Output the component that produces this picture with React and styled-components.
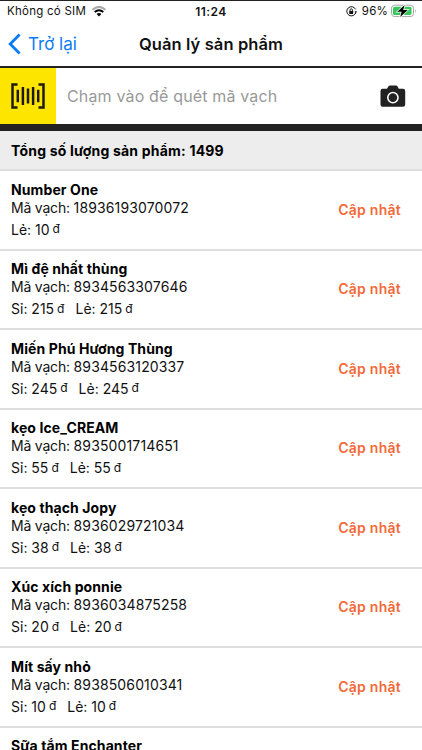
import React from 'react'
import styled, { createGlobalStyle } from 'styled-components';

const products = [
    { name: 'Number One', code: '18936193070072', retail: 10 },
    { name: 'Mì đệ nhất thùng', code: '8934563307646', wholesale: 215, retail: 215 },
    { name: 'Miến Phú Hương Thùng', code: '8934563120337', wholesale: 245, retail: 245 },
    { name: 'kẹo Ice_CREAM', code: '8935001714651', wholesale: 55, retail: 55 },
    { name: 'kẹo thạch Jopy', code: '8936029721034', wholesale: 38, retail: 38 },
    { name: 'Xúc xích ponnie', code: '8936034875258', wholesale: 20, retail: 20 },
    { name: 'Mít sấy nhỏ', code: '8938506010341', wholesale: 10, retail: 10 },
    { name: 'Sữa tắm Enchanter' },
];

const WifiIcon = () => (
    <svg width="14" height="11" viewBox="0 0 14 11" fill="none">
        <path d="M0.6 3.8 Q7 -2 13.4 3.8" stroke="#aaa" strokeWidth="2" />
        <path d="M2.7 6 Q7 2.4 11.3 6" stroke="#000" strokeWidth="2" />
        <path d="M4.6 7.9 Q7 6 9.4 7.9 L7 10.4 Z" fill="#000" />
    </svg>
);

const LockIcon = () => (
    <svg width="11" height="11" viewBox="0 0 11 11" fill="none">
        <path d="M9.9 6.3 A4.6 4.6 0 1 1 9.6 3.4" stroke="#111" strokeWidth="1" />
        <path d="M8.4 5.2 H11 L9.8 7.2 Z" fill="#111" />
        <rect x="3.2" y="4.9" width="4" height="3.1" rx="0.4" fill="#111" />
        <path d="M4 5 V4 A1.2 1.2 0 0 1 6.4 4 V5" stroke="#111" strokeWidth="0.9" />
    </svg>
);

const BatteryIcon = () => (
    <svg width="26" height="14" viewBox="0 0 26 14" fill="none">
        <rect x="0.5" y="1.2" width="22" height="11.4" rx="3.2" stroke="#a5a5a5" />
        <rect x="2" y="2.7" width="18.5" height="8.4" rx="1.9" fill="#35c759" />
        <path d="M24 5 Q25.6 7 24 9 Z" fill="#a5a5a5" />
        <path d="M13.6 1 L6.2 7.8 H10.6 L9.2 12.9 L16.8 6 H12.2 Z" fill="#000" stroke="#fff" strokeWidth="1.4" paintOrder="stroke" />
    </svg>
);

const BackIcon = () => (
    <svg width="13" height="22" viewBox="0 0 13 22" fill="none">
        <path d="M11.6 1.6 L2.2 11 L11.6 20.4" stroke="#0b7bf4" strokeWidth="2.8" />
    </svg>
);

const BarcodeIcon = () => (
    <svg width="34" height="26" viewBox="0 0 34 26" fill="none" stroke="#1d1b08" strokeWidth="2.5">
        <path d="M6.5 1.5 H1.5 V24.5 H6.5 M27.5 1.5 H32.5 V24.5 H27.5" />
        <path d="M6.8 6.8 V19.2 M11.9 4 V22 M17 5.6 V20.4 M22.1 4 V22 M27.2 6.8 V19.2" />
    </svg>
);

const CameraIcon = () => (
    <svg width="26" height="22" viewBox="0 0 26 22">
        <path d="M2.5 3.8 H7 L8.3 1.5 Q9 0.4 10 0.4 H15.8 Q17 0.4 17.6 1.5 L18.8 3.8 H23 Q25.2 3.8 25.2 6 V19.5 Q25.2 21.7 23 21.7 H2.7 Q0.5 21.7 0.5 19.5 V6 Q0.5 3.8 2.5 3.8 Z" fill="#222" />
        <circle cx="12.9" cy="12.6" r="5.1" fill="none" stroke="#fff" strokeWidth="1.6" />
    </svg>
);

const Price = ({ label, value }) => (
    <span>{label}: {value}<Currency>đ</Currency></span>
);

const App = () => {
    return (
        <>
            <GlobalStyle />
            <Screen>
                <StatusBar>
                    <Carrier>Không có SIM <WifiIcon /></Carrier>
                    <Clock>11:24</Clock>
                    <Power><LockIcon /> <span>96%</span> <BatteryIcon /></Power>
                </StatusBar>

                <NavBar>
                    <BackButton><BackIcon /> Trở lại</BackButton>
                    <Title>Quản lý sản phẩm</Title>
                </NavBar>

                <ScanBar>
                    <ScanButton><BarcodeIcon /></ScanButton>
                    <Placeholder>Chạm vào để quét mã vạch</Placeholder>
                    <CameraIcon />
                </ScanBar>

                <Summary>Tổng số lượng sản phẩm: 1499</Summary>

                {
                    products.map((item) => {
                        return (
                            <Row key={item.name}>
                                <div>
                                    <Name>{item.name}</Name>
                                    {item.code && (
                                        <>
                                            <Code>Mã vạch: <Digits>{item.code}</Digits></Code>
                                            <Prices>
                                                {item.wholesale && <Price label="Sỉ" value={item.wholesale} />}
                                                <Price label="Lẻ" value={item.retail} />
                                            </Prices>
                                        </>
                                    )}
                                </div>
                                {item.code && <UpdateButton>Cập nhật</UpdateButton>}
                            </Row>
                        )
                    })
                }
            </Screen>
        </>
    )
}

export default App

const GlobalStyle = createGlobalStyle`
    * {
        box-sizing: border-box;
    }

    body {
        margin: 0;
        background: #fff;
        font-family: Inter, "Liberation Sans", sans-serif;
        color: #111;
    }

    button {
        border: 0;
        padding: 0;
        background: none;
        font-family: inherit;
    }

    svg {
        display: block;
        flex: none;
    }
`

const Screen = styled.div`
    height: 750px;
    overflow: hidden;
    border-top: 1px solid #222;
    white-space: nowrap;
`

const StatusBar = styled.div`
    display: grid;
    grid-template-columns: 1fr auto 1fr;
    align-items: center;
    height: 20px;
    padding: 0 7px;
    font-size: 11.5px;
`

const Carrier = styled.div`
    display: flex;
    align-items: center;
    gap: 6px;
    letter-spacing: 0.25px;
`

const Clock = styled.div`
    font-size: 12px;
    font-weight: 600;
    letter-spacing: 0.4px;
`

const Power = styled.div`
    display: flex;
    align-items: center;
    justify-content: flex-end;
    gap: 5px;
    margin-right: -2px;
    letter-spacing: 0.2px;

    svg:last-child {
        margin-left: -2px;
    }
`

const NavBar = styled.div`
    display: grid;
    grid-template-columns: 1fr auto 1fr;
    align-items: center;
    height: 45px;
    padding: 0 8px;
`

const BackButton = styled.button`
    display: flex;
    align-items: center;
    gap: 7px;
    font-size: 17px;
    color: #0b7bf4;
`

const Title = styled.div`
    font-size: 16.5px;
    font-weight: 600;
    letter-spacing: 0.1px;
`

const ScanBar = styled.div`
    display: flex;
    align-items: center;
    height: 65px;
    padding-right: 16px;
    border-top: 2px solid #222;
    border-bottom: 7px solid #222;
`

const ScanButton = styled.button`
    display: flex;
    align-items: center;
    justify-content: center;
    width: 56px;
    height: 100%;
    background: #fee500;
`

const Placeholder = styled.div`
    flex: 1;
    padding-left: 11px;
    font-size: 16px;
    letter-spacing: 0.16px;
    line-height: 20px;
    color: #999;
`

const Summary = styled.div`
    height: 40px;
    padding-left: 11px;
    border-bottom: 2px solid #dedede;
    background: #ededed;
    font-size: 14px;
    font-weight: 700;
    letter-spacing: 0.2px;
    line-height: 39px;
    color: #000;
`

const Row = styled.div`
    display: flex;
    justify-content: space-between;
    height: 79.5px;
    padding: 9.7px 21px 0 11px;
    border-bottom: 2px solid #dedede;
`

const Name = styled.div`
    font-size: 14px;
    font-weight: 700;
    letter-spacing: 0.1px;
    line-height: 18px;
    color: #000;
`

const Code = styled.div`
    font-size: 14px;
    letter-spacing: -0.2px;
    line-height: 17px;
`

const Digits = styled.span`
    letter-spacing: 0.13px;
`

const Prices = styled.div`
    display: flex;
    gap: 11px;
    margin-top: 5px;
    font-size: 14px;
    line-height: 17px;
`

const Currency = styled.span`
    position: relative;
    top: -1.5px;
    margin-left: 3px;
    font-size: 12px;
`

const UpdateButton = styled.button`
    height: 57px;
    font-size: 14px;
    font-weight: 600;
    letter-spacing: 0.25px;
    color: #f26a3a;
`
